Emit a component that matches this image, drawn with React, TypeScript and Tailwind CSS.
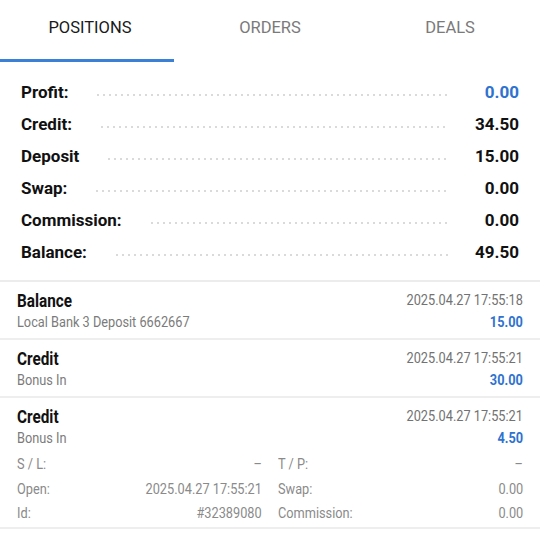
import React from "react";

const C = ({
  children,
  right = false,
  className = "",
}: {
  children: React.ReactNode;
  right?: boolean;
  className?: string;
}) => (
  <span
    className={`inline-block whitespace-nowrap scale-x-[0.85] ${
      right ? "origin-right" : "origin-left"
    } ${className}`}
  >
    {children}
  </span>
);

const summary: { label: string; value: string; blue?: boolean }[] = [
  { label: "Profit:", value: "0.00", blue: true },
  { label: "Credit:", value: "34.50" },
  { label: "Deposit", value: "15.00" },
  { label: "Swap:", value: "0.00" },
  { label: "Commission:", value: "0.00" },
  { label: "Balance:", value: "49.50" },
];

const deals = [
  {
    title: "Balance",
    sub: "Local Bank 3 Deposit 6662667",
    date: "2025.04.27 17:55:18",
    amount: "15.00",
  },
  {
    title: "Credit",
    sub: "Bonus In",
    date: "2025.04.27 17:55:21",
    amount: "30.00",
  },
];

function DealHead({
  title,
  sub,
  date,
  amount,
}: {
  title: string;
  sub: string;
  date: string;
  amount: string;
}) {
  return (
    <div className="flex justify-between">
      <div className="flex flex-col">
        <div className="h-[22px] flex items-center text-[18px] font-bold text-[#111111]">
          <C>{title}</C>
        </div>
        <div className="h-[22px] flex items-center text-[15px] text-[#7b7b7b]">
          <C>{sub}</C>
        </div>
      </div>
      <div className="flex flex-col items-end">
        <div className="h-[22px] flex items-center text-[15px] text-[#727272]">
          <C right>{date}</C>
        </div>
        <div className="h-[22px] flex items-center text-[15px] font-bold text-[#2f72cf]">
          <C right>{amount}</C>
        </div>
      </div>
    </div>
  );
}

export default function App() {
  return (
    <div
      className="w-[540px] h-[540px] bg-white overflow-hidden"
      style={{ fontFamily: "Roboto, 'Noto Sans', sans-serif" }}
    >
      {/* Tabs */}
      <div className="grid grid-cols-3 h-[62px]">
        <div className="flex flex-col">
          <div className="h-[59px] flex items-center justify-center pb-[3px] text-[16.5px] text-[#1a1a1a]">
            POSITIONS
          </div>
          <div className="h-[3px] w-[174px] bg-[#3a80d6]" />
        </div>
        <div className="h-[59px] flex items-center justify-center pb-[3px] text-[16.5px] text-[#7a7a7a]">
          ORDERS
        </div>
        <div className="h-[59px] flex items-center justify-center pb-[3px] text-[16.5px] text-[#7a7a7a]">
          DEALS
        </div>
      </div>

      {/* Summary */}
      <div className="pt-[15px] pb-[11px]">
        {summary.map((r) => (
          <div key={r.label} className="flex items-center h-[32px] px-[21px]">
            <span className="text-[17px] font-bold text-[#111111]">{r.label}</span>
            <div className="flex-1 ml-[27px] mt-[3px] h-[4px] bg-[radial-gradient(circle,#dadada_0.8px,transparent_1.3px)] bg-[length:6px_4px] bg-repeat-x" />
            <span
              className={`w-[70px] text-right text-[17px] font-bold ${
                r.blue ? "text-[#2f72cf]" : "text-[#111111]"
              }`}
            >
              {r.value}
            </span>
          </div>
        ))}
      </div>

      {/* Deals */}
      <div className="border-t-2 border-[#ececec]">
        {deals.map((d) => (
          <div key={d.amount} className="px-[17px] pt-[7px] pb-[5px] border-b-2 border-[#eeeeee]">
            <DealHead {...d} />
          </div>
        ))}
        <div className="px-[17px] pt-[7px] pb-[1px] border-b-2 border-[#eeeeee]">
          <DealHead
            title="Credit"
            sub="Bonus In"
            date="2025.04.27 17:55:21"
            amount="4.50"
          />
          <div className="grid grid-cols-2 gap-x-[16px] text-[15px] text-[#8a8a8a] mt-[3px]">
            <div className="h-[24.5px] flex items-center justify-between">
              <C>S / L:</C>
              <C right>–</C>
            </div>
            <div className="h-[24.5px] flex items-center justify-between">
              <C>T / P:</C>
              <C right>–</C>
            </div>
            <div className="h-[24.5px] flex items-center justify-between">
              <C>Open:</C>
              <C right>2025.04.27 17:55:21</C>
            </div>
            <div className="h-[24.5px] flex items-center justify-between">
              <C>Swap:</C>
              <C right>0.00</C>
            </div>
            <div className="h-[24.5px] flex items-center justify-between">
              <C>Id:</C>
              <C right>#32389080</C>
            </div>
            <div className="h-[24.5px] flex items-center justify-between">
              <C>Commission:</C>
              <C right>0.00</C>
            </div>
          </div>
        </div>
      </div>
    </div>
  );
}
